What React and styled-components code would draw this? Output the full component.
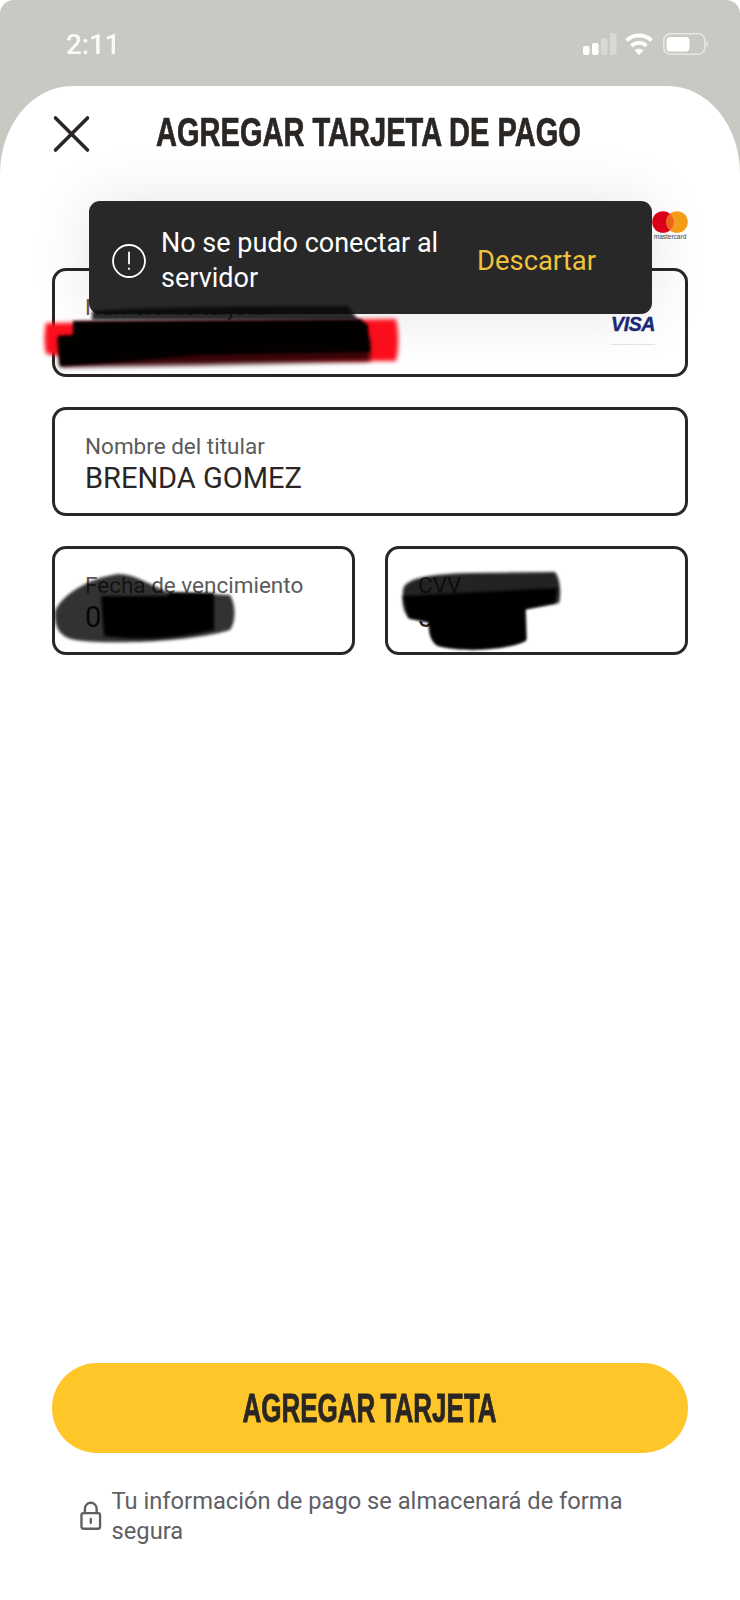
import { createGlobalStyle, styled } from 'styled-components';

const GlobalStyle = createGlobalStyle`
  html, body {
    margin: 0;
    background: #fff;
  }
  * {
    box-sizing: border-box;
  }
`;

const Screen = styled.div`
  width: 740px;
  height: 1600px;
  background: #c9c8c3;
  border-radius: 14px 14px 0 0;
  display: flex;
  flex-direction: column;
  overflow: hidden;
  font-family: Roboto, "Liberation Sans", sans-serif;
`;

const StatusBar = styled.div`
  height: 86px;
  flex: none;
  display: flex;
  justify-content: space-between;
  align-items: center;
  padding: 2px 31px 0 66px;
  color: #fff;
`;

const Time = styled.span`
  font-size: 28px;
  font-weight: 500;
  letter-spacing: -.2px;
  opacity: .92;
`;

const StatusIcons = styled.div`
  display: flex;
  align-items: center;
  gap: 8px;
`;

const Sheet = styled.main`
  flex: 1;
  position: relative;
  background: #fff;
  border-radius: 72px 72px 0 0 / 88px 88px 0 0;
  padding: 0 52px 54px;
  display: flex;
  flex-direction: column;
`;

const Header = styled.header`
  height: 88px;
  flex: none;
  display: flex;
  align-items: center;
  padding-top: 8px;
`;

const CloseButton = styled.button`
  width: 40px;
  height: 40px;
  flex: none;
  padding: 0;
  border: 0;
  background: none;
  margin-right: 64px;
  color: #2a2624;
`;

// no condensed face is installed, so the heading is squeezed horizontally
const Title = styled.h1`
  margin: 0 -170px 4px 0;
  font-family: "Liberation Sans", sans-serif;
  font-size: 40px;
  font-weight: 700;
  color: #2a2624;
  white-space: nowrap;
  transform: scaleX(.726);
  transform-origin: left center;
  -webkit-text-stroke: .7px #2a2624;
`;

const Toast = styled.div`
  position: absolute;
  top: 115px;
  left: 89px;
  width: 563px;
  height: 113px;
  z-index: 2;
  background: #282828;
  border-radius: 11px;
  box-shadow: 0 0 60px rgba(0, 0, 0, .1);
  display: flex;
  align-items: center;
  padding: 6px 22px 0;
  color: #fff;
`;

const ToastMessage = styled.p`
  flex: none;
  width: 312px;
  margin: 0 0 0 14px;
  font-size: 27px;
  line-height: 35px;
`;

const ToastAction = styled.span`
  margin-left: 4px;
  font-size: 27.4px;
  color: #f0c23c;
`;

const BrandRow = styled.div`
  height: 94px;
  flex: none;
  display: flex;
  justify-content: flex-end;
  padding-top: 37px;
`;

const Form = styled.div`
  display: flex;
  flex-direction: column;
  gap: 30px;
`;

const FieldRow = styled.div`
  display: grid;
  grid-template-columns: 303px 303px;
  justify-content: space-between;
`;

const Field = styled.div`
  position: relative;
  height: 109px;
  border: 3px solid #2a2624;
  border-radius: 14px;
  padding: 23px 30px 0;
`;

const FieldLabel = styled.div`
  font-size: 22.500px;
  line-height: 27px;
  color: #5b5b5b;
  white-space: nowrap;
`;

const FieldValue = styled.div`
  font-size: 29px;
  line-height: 36px;
  color: #2a2624;
  white-space: nowrap;
`;

// marker strokes drawn over the screenshot, they also cross the toast
const Scribble = styled.svg`
  position: absolute;
  z-index: 3;
  overflow: visible;
  pointer-events: none;
  left: ${p => p.$left}px;
  top: ${p => p.$top}px;
`;

const VisaMark = styled.div`
  position: absolute;
  right: 30px;
  top: 41px;
  width: 44px;
  padding-bottom: 8px;
  border-bottom: 1px solid #e4e4e4;
  font-family: "Liberation Sans", sans-serif;
  font-size: 19.500px;
  line-height: 24px;
  font-weight: 700;
  font-style: italic;
  letter-spacing: -.4px;
  text-align: center;
  color: #1a2a78;
  -webkit-text-stroke: .4px #1a2a78;
`;

const Footer = styled.footer`
  margin-top: auto;
`;

const PrimaryButton = styled.button`
  width: 100%;
  height: 90px;
  border: 0;
  border-radius: 45px;
  background: #fec629;
  color: #2a2624;
`;

const ButtonLabel = styled.span`
  display: inline-block;
  font-family: "Liberation Sans", sans-serif;
  font-size: 40px;
  font-weight: 700;
  word-spacing: -3px;
  white-space: nowrap;
  transform: scaleX(.65);
  -webkit-text-stroke: .8px #2a2624;
`;

const SecureNote = styled.div`
  display: flex;
  align-items: center;
  gap: 10px;
  margin: 33px 0 0 28px;
  color: #5f6064;
`;

const SecureText = styled.p`
  margin: 0;
  font-size: 23.700px;
  line-height: 30px;
`;

function SignalIcon() {
  return (
    <svg width="34" height="22" viewBox="0 0 34 22">
      <rect x="0" y="13" width="6.500" height="9" rx="2" fill="#fff" />
      <rect x="9" y="10" width="6.500" height="12" rx="2" fill="#fff" />
      <rect x="18" y="5" width="6.500" height="17" rx="2" fill="#fff" opacity=".3" />
      <rect x="27" y="0" width="6.500" height="22" rx="2" fill="#fff" opacity=".3" />
    </svg>
  );
}

function WifiIcon() {
  return (
    <svg width="28" height="22" viewBox="0 0 28 22" fill="none" stroke="#fff" strokeWidth="3.800">
      <path d="M1.500 7.500C8.500 .8 19.500 .8 26.500 7.500" />
      <path d="M6.500 12.800C10.800 9 17.200 9 21.500 12.800" />
      <path d="M14 22 9.500 17.300C12 15.200 16 15.200 18.500 17.300Z" fill="#fff" stroke="none" />
    </svg>
  );
}

function BatteryIcon() {
  return (
    <svg width="48" height="22" viewBox="-2 0 48 22">
      <rect x=".8" y=".8" width="41" height="20.400" rx="6.500" fill="none" stroke="#fff" strokeOpacity=".55" strokeWidth="1.600" />
      <rect x="3.500" y="4" width="23" height="14.500" rx="4" fill="#fff" />
      <path d="M43.500 8c2 .6 2.400 5.400 0 6Z" fill="#fff" opacity=".55" />
    </svg>
  );
}

function CloseIcon() {
  return (
    <svg width="40" height="40" viewBox="0 0 40 40" fill="none" stroke="currentColor" strokeWidth="3.600" strokeLinecap="round">
      <path d="M3.500 4 35.500 36" />
      <path d="M35.500 4 3.500 36" />
    </svg>
  );
}

function AlertIcon() {
  return (
    <svg width="36" height="36" viewBox="0 0 36 36" fill="none" stroke="#fff" strokeWidth="1.800" strokeLinecap="round">
      <circle cx="18" cy="18" r="16" />
      <path d="M18 9.500v11" />
      <path d="M18 25.500v.6" />
    </svg>
  );
}

function MastercardLogo() {
  return (
    <svg width="36" height="30" viewBox="0 0 36 30">
      <circle cx="11" cy="11" r="10.800" fill="#e3001b" />
      <circle cx="25" cy="11" r="10.800" fill="#f79e1b" />
      <path d="M18 2.800a10.800 10.800 0 0 1 0 16.400 10.800 10.800 0 0 1 0-16.400Z" fill="#f2661f" />
      <text x="18" y="27.500" fontSize="6.500" fontFamily="Liberation Sans, sans-serif" textAnchor="middle" fill="#444">mastercard</text>
    </svg>
  );
}

function LockIcon() {
  return (
    <svg width="22" height="30" viewBox="0 0 22 30" fill="none" stroke="currentColor" strokeWidth="2.400" strokeLinecap="round" strokeLinejoin="round">
      <rect x="1.500" y="12" width="19" height="16" rx="2" />
      <path d="M5 12V7.500a6 6 0 0 1 12 0V12" />
      <path d="M11 18v4" />
    </svg>
  );
}

function NumberScribble() {
  return (
    <Scribble $left={-13} $top={29} width="360" height="72" viewBox="42 300 360 72">
      <path d="M46 323 396 319C399 332 399 350 396 361L368 361 60 356 46 354C44 344 44 332 46 323Z" fill="#fb0f1c" style={{ filter: 'blur(2px)' }} />
      <path d="M58 338H370V361L200 365 60 367Z" fill="#3a0508" style={{ filter: 'blur(2.500px)' }} />
      <path d="M73 321 360 319 368 325 370 352 200 355 120 362 60 366 58 336 73 335Z" fill="#030000" style={{ filter: 'blur(1.500px)' }} />
      <path d="M92 311C150 307 260 306 348 306L358 320H92Z" fill="#080808" opacity=".85" style={{ filter: 'blur(1.500px)' }} />
    </Scribble>
  );
}

function DateScribble() {
  return (
    <Scribble $left={0} $top={24} width="180" height="72" viewBox="55 573 180 72">
      <path d="M55 612C60 596 88 578 118 574 135 574 150 585 168 592L230 595C236 605 236 622 230 630 190 642 110 645 75 640 60 637 54 628 55 612Z" fill="#000" opacity=".8" style={{ filter: 'blur(1.500px)' }} />
      <path d="M101 596H168V593H214V630C170 640 130 640 104 636Z" fill="#000" style={{ filter: 'blur(1.500px)' }} />
    </Scribble>
  );
}

function CvvScribble() {
  return (
    <Scribble $left={11} $top={19} width="165" height="86" viewBox="400 568 165 86">
      <path d="M404 590C406 578 430 574 470 573L556 572C562 580 562 596 560 603L526 609 527 640C510 650 460 652 438 645 430 638 431 630 430 622L410 618C403 610 403 600 404 590Z" fill="#000" opacity=".86" style={{ filter: 'blur(1.500px)' }} />
      <path d="M404 596 558 588 556 603 526 609 527 640C510 650 460 652 438 645 430 638 431 630 430 622L410 618Z" fill="#000" style={{ filter: 'blur(1.500px)' }} />
    </Scribble>
  );
}

export default function App() {
  return (
    <>
      <GlobalStyle />
      <Screen>
        <StatusBar>
          <Time>2:11</Time>
          <StatusIcons>
            <SignalIcon />
            <WifiIcon />
            <BatteryIcon />
          </StatusIcons>
        </StatusBar>

        <Sheet>
          <Header>
            <CloseButton aria-label="Cerrar"><CloseIcon /></CloseButton>
            <Title>AGREGAR TARJETA DE PAGO</Title>
          </Header>

          <Toast>
            <AlertIcon />
            <ToastMessage>No se pudo conectar al servidor</ToastMessage>
            <ToastAction>Descartar</ToastAction>
          </Toast>

          <BrandRow><MastercardLogo /></BrandRow>

          <Form>
            <Field>
              <FieldLabel>Número de tarjeta</FieldLabel>
              <NumberScribble />
              <VisaMark>VISA</VisaMark>
            </Field>
            <Field>
              <FieldLabel>Nombre del titular</FieldLabel>
              <FieldValue>BRENDA GOMEZ</FieldValue>
            </Field>
            <FieldRow>
              <Field>
                <FieldLabel>Fecha de vencimiento</FieldLabel>
                <FieldValue>0</FieldValue>
                <DateScribble />
              </Field>
              <Field>
                <FieldLabel>CVV</FieldLabel>
                <FieldValue>3</FieldValue>
                <CvvScribble />
              </Field>
            </FieldRow>
          </Form>

          <Footer>
            <PrimaryButton><ButtonLabel>AGREGAR TARJETA</ButtonLabel></PrimaryButton>
            <SecureNote>
              <LockIcon />
              <SecureText>Tu información de pago se almacenará de forma segura</SecureText>
            </SecureNote>
          </Footer>
        </Sheet>
      </Screen>
    </>
  );
}
